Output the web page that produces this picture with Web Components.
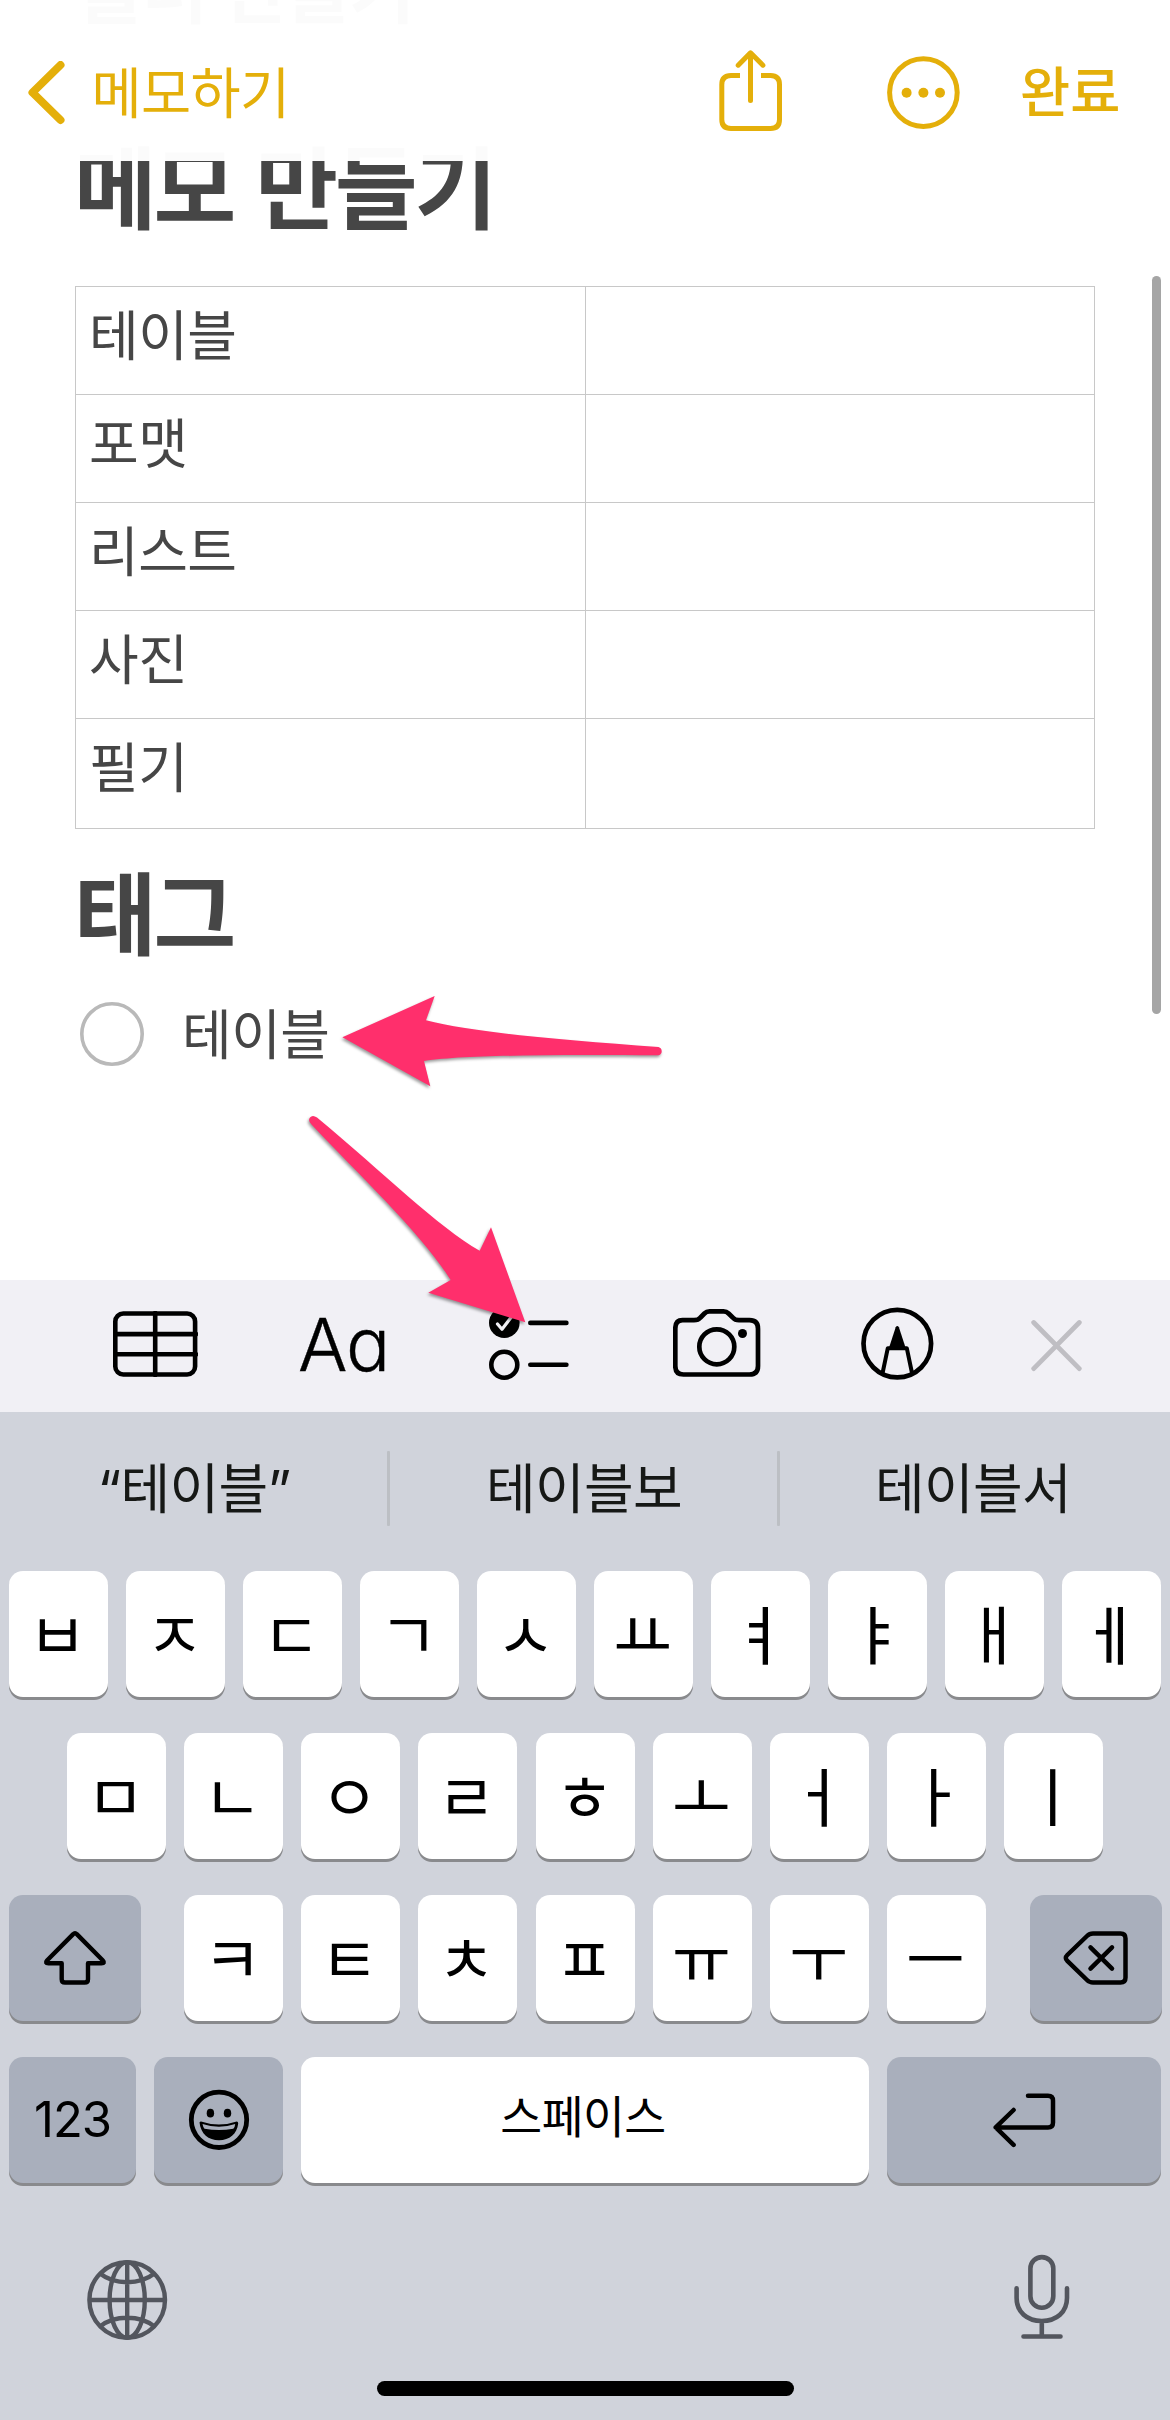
<!DOCTYPE html>
<html lang="ko">
<head>
<meta charset="utf-8">
<title>메모</title>
<style>
html,body{margin:0;padding:0;background:#fff}
body{width:1170px;height:2420px;overflow:hidden;font-family:"Noto Sans CJK KR",sans-serif}
</style>
</head>
<body>
<notes-app></notes-app>
<script>
const define = (name, css, html) => {
  customElements.define(name, class extends HTMLElement {
    constructor() {
      super();
      this.attachShadow({mode: 'open'}).innerHTML = `<style>${css}</style>${typeof html === 'function' ? html(this) : html}`;
    }
  });
};

/* Each icon: [viewBox, stroke width, markup] */
const ICONS = {
  back: ['28 62 38 64', 8, '<path d="M60.500 66 32.500 93.500 60.500 121"/>'],
  share: ['716 48 70 86', 5, '<path stroke-linecap="butt" d="M740 75.500H731Q721.800 75.500 721.800 84.700V119.500Q721.800 128.500 731 128.500H770.500Q779.500 128.500 779.500 119.500V84.700Q779.500 75.500 770.500 75.500H761"/><path d="M738.200 65.200 750.500 52.800 762.900 65.200M750.500 53V100.500"/>'],
  more: ['886 55 75 75', 5, '<circle cx="923.400" cy="92.600" r="33.800"/><g fill="currentColor" stroke="none"><circle cx="906.600" cy="92.700" r="5"/><circle cx="923.400" cy="92.700" r="5"/><circle cx="940" cy="92.700" r="5"/></g>'],
  circle: ['80 1002 64 64', 3.6, '<circle cx="112" cy="1034" r="30.200"/>'],
  table: ['113 1311 85 66', 4.6, '<rect x="115.300" y="1313.500" width="79.800" height="61" rx="8"/><path d="M155.200 1313V1375M115 1334.100H196M115 1354.300H196"/>'],
  checklist: ['487 1305 84 78', 4.6, '<circle cx="504.300" cy="1322.700" r="15.300" fill="currentColor" stroke="none"/><path stroke="#f1f0f5" stroke-width="3.200" d="M497.500 1324 502 1329.300 511 1317.500"/><path d="M530.300 1322.900H566.400M530.300 1364.700H566.400"/><circle cx="504.300" cy="1364.700" r="13"/>'],
  camera: ['673 1308 88 70', 4.7, '<path d="M682.500 1320.200H694Q698.300 1320.200 700.500 1317.500L704.400 1313.500Q706.500 1311.400 709.500 1311.400H723.500Q726.500 1311.400 728.600 1313.500L732.700 1317.500Q735 1320.200 739 1320.200H749.500Q758 1320.200 758 1328.700V1366Q758 1374.500 749.500 1374.500H683.500Q675.300 1374.500 675.300 1366V1328.700Q675.300 1320.200 682.500 1320.200Z"/><circle cx="716.800" cy="1346.800" r="17.500"/><circle cx="742.500" cy="1333.500" r="4.500" fill="currentColor" stroke="none"/>'],
  pen: ['861 1307 73 73', 4.700, '<circle cx="897.300" cy="1343.600" r="33.800"/><path stroke-width="4" d="M882.900 1371.500 887.800 1348.200H906.800L911.700 1371.500"/><path d="M895.700 1327.300Q897.300 1324.500 898.900 1327.300L906 1349H888.600Z" fill="currentColor" stroke="none"/>'],
  close: ['1030 1319 52 54', 4.800, '<path d="M1033.700 1322.500 1079.300 1368.600M1079.300 1322.500 1033.700 1368.600"/>'],
  shift: ['42 1930 66 56', 4.400, '<path d="M73.200 1934.100Q75 1932.100 76.800 1934.100L102.900 1960.500Q105.500 1963.200 101.500 1963.200H88V1979.200Q88 1982.500 84.700 1982.500H65Q61.700 1982.500 61.700 1979.200V1963.200H48.400Q44.500 1963.200 47 1960.500Z"/>'],
  backspace: ['1062 1930 66 56', 4.500, '<path d="M1092 1933.500H1119.500Q1124.500 1933.500 1124.500 1938.500V1977.500Q1124.500 1982.500 1119.500 1982.500H1092Q1088.500 1982.500 1086 1980L1066.300 1960.800Q1063.300 1957.900 1066.300 1955L1086 1936Q1088.500 1933.500 1092 1933.500Z"/><path d="M1089.500 1947.400 1111 1968.600M1111 1947.400 1089.500 1968.600"/>'],
  emoji: ['187 2089 62 62', 4.800, '<circle cx="218" cy="2119.800" r="27.700"/><g fill="currentColor" stroke="none"><ellipse cx="209.400" cy="2113.200" rx="3.700" ry="4.400"/><ellipse cx="226.500" cy="2113.200" rx="3.700" ry="4.400"/><path fill-rule="evenodd" d="M198.500 2122.500Q199 2121.200 201 2121.700Q218 2127.500 234.800 2121.700Q237.200 2121 237.200 2123.500C236 2134 228.500 2140.200 218 2140.200S199.800 2134 198.500 2122.500ZM201.500 2124Q218 2129.500 234.200 2124Q234 2127 232.300 2128.700Q218 2131.500 203.500 2128.700Q202 2127 201.500 2124Z"/></g>'],
  enter: ['992 2093 65 57', 4.500, '<path d="M1028 2096.800H1048Q1053 2096.800 1053 2101.800V2123.400Q1053 2128.400 1048 2128.400H996M1013.600 2111 995.700 2128.400 1013.600 2145.900"/>'],
  globe: ['87 2260 81 81', 4.400, '<circle cx="127.200" cy="2300" r="37.800"/><ellipse cx="127.200" cy="2300" rx="17.600" ry="37.800"/><path stroke-linecap="butt" d="M127.200 2262V2338M89 2300H165M100 2273.500Q111 2282.200 127.200 2282.200T154.400 2273.500M100 2326.500Q111 2317.800 127.200 2317.800T154.400 2326.500"/>'],
  mic: ['1013 2254 58 86', 4.600, '<rect x="1030.400" y="2257.100" width="22.900" height="50.600" rx="11.450"/><path d="M1016.600 2288.300V2298C1016.600 2312 1027 2321 1041.800 2321S1067 2312 1067 2298V2288.300M1041.800 2321V2336M1023.500 2336.500H1060.500"/>']
};
define('ui-icon',
  ':host{display:block;flex:none}svg{display:block;fill:none;stroke:currentColor;stroke-linecap:round;stroke-linejoin:round}',
  el => {
    const [box, sw, body] = ICONS[el.getAttribute('name')];
    const [, , w, h] = box.split(' ');
    return `<svg width="${w}" height="${h}" viewBox="${box}" stroke-width="${sw}">${body}</svg>`;
  });

define('nav-bar', `
  :host{display:flex;box-sizing:border-box;position:absolute;left:0;top:0;width:1170px;height:161px;padding:25px 0 0 28px;background:rgba(255,255,255,.98);color:#e4af0a;align-items:flex-start}
  .back{display:flex;align-items:center;height:136px;width:688px}
  .label{font-size:54.500px;line-height:60px;letter-spacing:-.600px;margin:-6px 0 0 25.500px}
  .act{display:flex;align-items:flex-start}
  .share{margin-top:23px}.more{margin:30px 0 0 100px}
  .done{font-size:54.500px;font-weight:500;line-height:60px;letter-spacing:0;margin:34px 0 0 59px}
`, `<div class="back"><ui-icon name="back"></ui-icon><span class="label">메모하기</span></div>
  <div class="act"><ui-icon class="share" name="share"></ui-icon><ui-icon class="more" name="more"></ui-icon><span class="done">완료</span></div>`);

define('note-heading',
  ':host{display:block;height:130px;font-size:90px;line-height:130px;font-weight:700;letter-spacing:-3.200px;white-space:nowrap;color:#464646}:host([small]){font-size:72px;letter-spacing:-2.800px}',
  '<slot></slot>');

define('note-table', `
  :host{display:grid;grid-template-columns:510px 508px;width:1020px;box-sizing:border-box;border:1px solid #c8c8c8;grid-template-rows:repeat(4,108px) 109px}
  div{box-sizing:border-box;border-bottom:1px solid #c8c8c8;font-size:54px;line-height:80px;padding:6px 0 0 13px;letter-spacing:-.500px;color:#464646}
  div:nth-of-type(odd){border-right:1px solid #c8c8c8}
  div:nth-last-of-type(-n+2){border-bottom:0}
`, el => el.getAttribute('rows').split(',').map(t => `<div>${t}</div><div></div>`).join(''));

define('check-item', `
  :host{display:flex;align-items:center;height:80px;font-size:54px;line-height:80px;letter-spacing:-.500px;color:#464646}
  ui-icon{color:#b9b9b9;margin-right:38px}
  span{margin-top:-5px}
`, '<ui-icon name="circle"></ui-icon><span><slot></slot></span>');

define('note-page', `
  :host{display:flex;flex-direction:column;box-sizing:border-box;height:1280px;padding-left:75px;overflow:hidden;background:#fff}
  .h1{margin:-79px 0 0 3px}.h2{margin:67px 0 0 -1px}.t{margin-top:38px}.h3{margin:15px 0 0 -1px}.c{margin:20px 0 0 5px}
`, `<note-heading small class="h1">폴더 만들기</note-heading>
  <note-heading class="h2">메모 만들기</note-heading>
  <note-table class="t" rows="테이블,포맷,리스트,사진,필기"></note-table>
  <note-heading class="h3">태그</note-heading>
  <check-item class="c">테이블</check-item>`);

define('format-bar', `
  :host{display:flex;height:132px;background:#f1f0f5;color:#000;box-sizing:border-box;padding-left:113px;align-items:flex-start}
  .table{margin-top:31px}
  .aa{font-family:Inter,sans-serif;font-weight:300;font-size:73.500px;line-height:90px;letter-spacing:-1.200px;font-feature-settings:"cv11","ss03";-webkit-text-stroke:.4px #000;margin:20px 0 0 100px;width:189px}
  .check{margin-top:25px}.camera{margin:28px 0 0 102px}.pen{margin:27px 0 0 100px}.close{margin:39px 0 0 96px;color:#bfbec3}
`, `<ui-icon class="table" name="table"></ui-icon><span class="aa">Aa</span><ui-icon class="check" name="checklist"></ui-icon><ui-icon class="camera" name="camera"></ui-icon><ui-icon class="pen" name="pen"></ui-icon><ui-icon class="close" name="close"></ui-icon>`);

define('suggestion-bar', `
  :host{display:flex;align-items:center;height:159px;color:#161816;font:54px/80px Inter,"Noto Sans CJK KR",sans-serif;letter-spacing:-.700px}
  span{box-sizing:border-box;width:387px;padding-left:1px;text-align:center;margin-top:-4px}
  span:last-child{width:390px;padding:0 4px 0 0}
  i{width:3px;height:75px;margin-top:-6px;background:#bcbfc4;border-radius:1px}
`, '<span>“테이블”</span><i></i><span>테이블보</span><i></i><span>테이블서</span>');

define('key-cap', `
  :host{display:flex;flex:none;justify-content:center;align-items:center;box-sizing:border-box;width:99px;height:126px;border-radius:14px;background:#fff;box-shadow:0 3px 0 #898a8d;font-size:64px;line-height:90px;color:#000}
  :host([letter]){padding:0 2px 7px 0}
  :host([dark]){background:#a9afbc}
  :host([num]){font:400 49px/60px Inter,sans-serif;letter-spacing:-1px}
  :host([space]){font-size:45.500px;letter-spacing:-.500px;padding:0 4px 12px 0}
`, '<slot></slot>');

define('key-row', `
  :host{display:flex;height:126px;margin-bottom:36px;padding:0 9px;gap:18px}
  :host([inset]){padding-left:67px}
`, '<slot></slot>');

const keys = s => [...s].map((c, i) => `<key-cap letter class="k${i}">${c}</key-cap>`).join('');
define('soft-keyboard', `
  :host{display:block;height:1008px;background:#d0d3db}
  .r2 .k4{margin-left:1px}.r3 .k3{margin-left:1px}
  .r3 .k0{margin-left:25px}.back{margin-left:26px}
  .foot{display:flex;justify-content:space-between;padding:41px 99px 0 87px;color:#53565e}
  .mic{margin-top:-6px}
  .home{width:417px;height:15px;border-radius:8px;background:#000;margin:40px auto 0 377px}
`, `<suggestion-bar></suggestion-bar>
  <key-row>${keys('ㅂㅈㄷㄱㅅㅛㅕㅑㅐㅔ')}</key-row>
  <key-row inset class="r2">${keys('ㅁㄴㅇㄹㅎㅗㅓㅏㅣ')}</key-row>
  <key-row class="r3"><key-cap dark style="width:132px"><ui-icon name="shift"></ui-icon></key-cap>${keys('ㅋㅌㅊㅍㅠㅜㅡ')}<key-cap class="back" dark style="width:132px"><ui-icon name="backspace"></ui-icon></key-cap></key-row>
  <key-row><key-cap dark num style="width:127px">123</key-cap><key-cap dark style="width:129px"><ui-icon name="emoji"></ui-icon></key-cap><key-cap space style="width:568px">스페이스</key-cap><key-cap dark style="width:274px"><ui-icon name="enter"></ui-icon></key-cap></key-row>
  <div class="foot"><ui-icon name="globe"></ui-icon><ui-icon class="mic" name="mic"></ui-icon></div>
  <div class="home"></div>`);

define('callout-arrows',
  ':host{position:absolute;left:300px;top:980px;pointer-events:none}svg{display:block;filter:drop-shadow(-1px 2px 1.500px rgba(0,0,0,.4))}',
  `<svg width="380" height="360" viewBox="300 980 380 360" fill="#ff2f6c">
    <path d="M342.400 1037.300 434.700 996 426 1020.300C470 1032 560 1040 658.500 1047Q661.700 1048 661.700 1051.200T658.500 1055.300C580 1055 470 1054 424 1061L430.300 1086.300Z"/>
    <path d="M525.300 1322.300 491 1227.300 479.700 1250.700C438 1227 385 1174 317 1117.500Q312.500 1114.500 310 1117.500T311.500 1124.500C360 1176 420 1232 450.700 1280L428.300 1292.700Z"/>
  </svg>`);

define('scroll-thumb', ':host{position:absolute;left:1152px;top:276px;width:9px;height:738px;border-radius:5px;background:#a5a5a5}', '');

define('notes-app',
  ':host{display:flex;flex-direction:column;position:relative;width:1170px;height:2420px;overflow:hidden}',
  '<note-page></note-page><nav-bar></nav-bar><scroll-thumb></scroll-thumb><format-bar></format-bar><soft-keyboard></soft-keyboard><callout-arrows></callout-arrows>');
</script>
</body>
</html>
